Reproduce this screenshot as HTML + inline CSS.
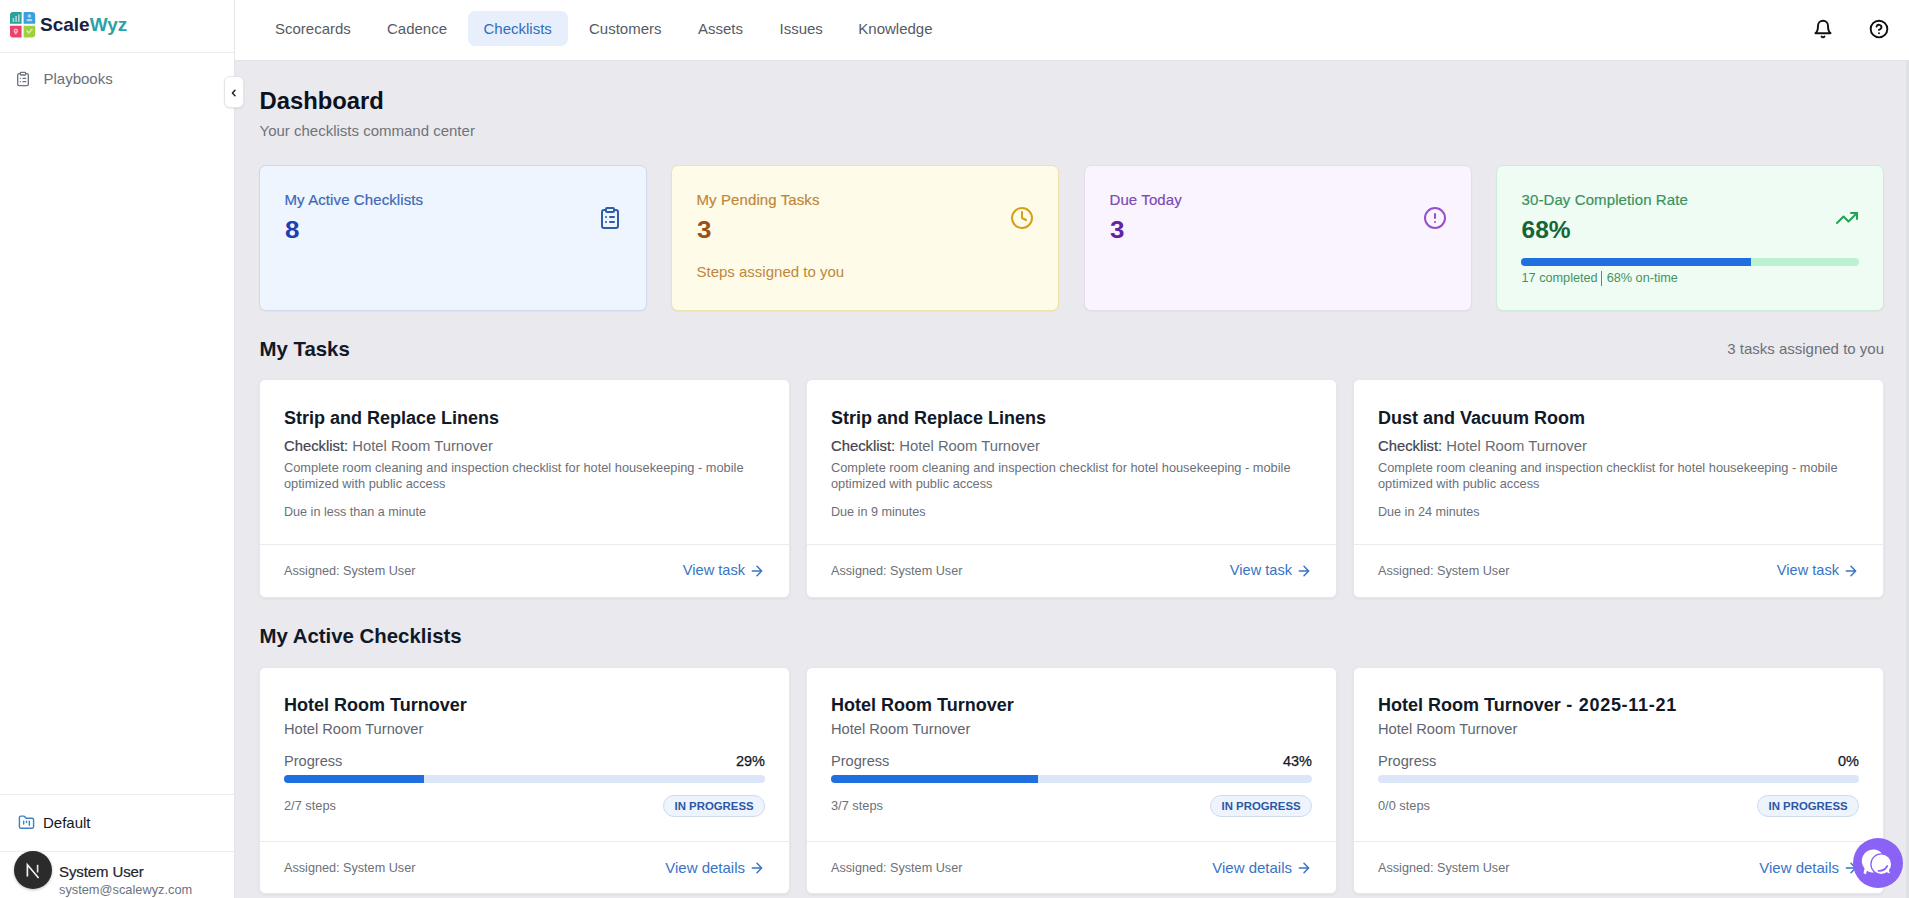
<!DOCTYPE html>
<html><head><meta charset="utf-8">
<style>
*{box-sizing:border-box;margin:0;padding:0}
html,body{width:1909px;height:898px;overflow:hidden}
body{font-family:"Liberation Sans",sans-serif;background:#e9e9ee;position:relative;color:#111827}
.t{position:absolute;white-space:nowrap}
.abs{position:absolute}
#sidebar{position:absolute;left:0;top:0;width:235px;height:898px;background:#fff;border-right:1px solid #e3e5e8}
#header{position:absolute;left:235px;top:0;width:1674px;height:61px;background:#fff;border-bottom:1px solid #e1e3e6}
.card{position:absolute;background:#fff;border:1px solid #e6e8eb;border-radius:6px;box-shadow:0 1px 3px rgba(16,24,40,0.06)}
.kpi{position:absolute;top:165px;width:388px;height:146px;border-radius:7px;border:1px solid;box-shadow:0 1px 2px rgba(0,0,0,.04)}
.ic{position:absolute;fill:none;stroke-linecap:round;stroke-linejoin:round}
</style></head>
<body>

<div id="sidebar">
<svg class="abs" style="left:9px;top:11px" width="28" height="28" viewBox="0 0 28 28">
<path d="M1 4 Q1 1 4 1 L12.6 1 L12.6 12.8 L1 12.8 Z" fill="#2ba39b"/>
<path d="M14.6 1 L23 1 Q26.2 1 26.2 4 L26.2 12.8 L14.6 12.8 Z" fill="#3a9fe0"/>
<path d="M1 14.7 L12.6 14.7 L12.6 26.4 L4 26.4 Q1 26.4 1 23.4 Z" fill="#ea426d"/>
<path d="M14.6 14.7 L26.2 14.7 L26.2 23.4 Q26.2 26.4 23 26.4 L14.6 26.4 Z" fill="#9fd03f"/>
<rect x="3.6" y="7" width="1.6" height="4" fill="#fff" opacity=".6"/><rect x="6.3" y="5" width="1.6" height="6" fill="#fff" opacity=".6"/><rect x="9" y="3.5" width="1.6" height="7.5" fill="#fff" opacity=".6"/>
<circle cx="20.4" cy="5" r="1.8" fill="#fff" opacity=".6"/><rect x="17.5" y="8" width="5.8" height="2.2" rx="1" fill="#fff" opacity=".6"/>
<path d="M6.8 17.5 a2.3 2.3 0 0 1 2.3 2.3 c0 1.6 -2.3 4 -2.3 4 c0 0 -2.3 -2.4 -2.3 -4 a2.3 2.3 0 0 1 2.3 -2.3z" fill="#fff" opacity=".6"/><circle cx="6.8" cy="19.8" r=".8" fill="#ea426d"/>
<path d="M17.6 19.6 L19.8 21.8 L23.4 18" stroke="#fff" stroke-width="1.5" fill="none" opacity=".6"/>
</svg>
<div class="t" style="top:13.62px;font-size:19px;line-height:22.8px;color:#17223f;font-weight:700;left:40px;"><span style="color:#17223f">Scale</span><span style="color:#2aa3a6">Wyz</span></div>
<div class="abs" style="left:0;top:52px;width:234px;height:1px;background:#ebecef"></div>
<svg class="ic" style="left:15px;top:71px" width="16" height="16" viewBox="0 0 24 24" stroke="#6b7280" stroke-width="2">
<rect x="8" y="2" width="8" height="4" rx="1"/><path d="M16 4h2a2 2 0 0 1 2 2v14a2 2 0 0 1-2 2H6a2 2 0 0 1-2-2V6a2 2 0 0 1 2-2h2"/><path d="M12 11h4M12 16h4M8 11h.01M8 16h.01"/></svg>
<div class="t" style="top:70.10px;font-size:15px;line-height:18.0px;color:#6a6e76;left:43.5px;">Playbooks</div>
<div class="abs" style="left:0;top:794px;width:234px;height:1px;background:#ebecef"></div>
<svg class="ic" style="left:18px;top:814px" width="17" height="17" viewBox="0 0 24 24" stroke="#3b82c4" stroke-width="2">
<path d="M20 20a2 2 0 0 0 2-2V8a2 2 0 0 0-2-2h-7.9a2 2 0 0 1-1.69-.9L9.6 3.9A2 2 0 0 0 7.93 3H4a2 2 0 0 0-2 2v13a2 2 0 0 0 2 2Z"/><path d="M8 10v4M12 10v2M16 10v6" /></svg>
<div class="t" style="top:814.20px;font-size:15px;line-height:18.0px;color:#111827;left:43px;">Default</div>
<div class="abs" style="left:0;top:851px;width:234px;height:1px;background:#ebecef"></div>
<div class="abs" style="left:14px;top:851px;width:38px;height:38px;border-radius:50%;background:#2b2b2b;box-shadow:0 1px 3px rgba(0,0,0,.25)"></div>
<svg class="abs" style="left:14px;top:851px" width="38" height="38" viewBox="0 0 38 38"><path d="M13.4 25.6 V13.8 L24.6 27" stroke="#f0f0f0" stroke-width="1.7" fill="none" stroke-linejoin="miter"/><path d="M23.6 13.8 V21.5" stroke="#e8e8e8" stroke-width="1.6"/></svg>
<div class="t" style="top:863.00px;font-size:15px;line-height:18.0px;color:#1f2430;left:59px;letter-spacing:-0.1px;-webkit-text-stroke:0.2px #1f2430;">System User</div>
<div class="t" style="top:882.38px;font-size:12.8px;line-height:15.36px;color:#6b7280;left:59px;">system@scalewyz.com</div>
</div>
<div class="abs" style="left:224px;top:76px;width:20px;height:32px;background:#fff;border:1px solid #e3e5e9;border-radius:6px;box-shadow:0 1px 2px rgba(0,0,0,.08)"></div>
<svg class="ic" style="left:229px;top:88px" width="10" height="10" viewBox="0 0 10 10" stroke="#222" stroke-width="1.5"><path d="M6 2.2 L3.4 5 L6 7.8"/></svg>
<div id="header"></div>
<div class="abs" style="left:468px;top:11px;width:100px;height:35px;border-radius:7px;background:#e6effb"></div>
<div class="t" style="top:20.30px;font-size:15px;line-height:18.0px;color:#565b62;left:275px;">Scorecards</div>
<div class="t" style="top:20.30px;font-size:15px;line-height:18.0px;color:#565b62;left:387px;">Cadence</div>
<div class="t" style="top:20.30px;font-size:15px;line-height:18.0px;color:#2f6dbd;left:483.5px;">Checklists</div>
<div class="t" style="top:20.30px;font-size:15px;line-height:18.0px;color:#565b62;left:589px;">Customers</div>
<div class="t" style="top:20.30px;font-size:15px;line-height:18.0px;color:#565b62;left:698px;">Assets</div>
<div class="t" style="top:20.30px;font-size:15px;line-height:18.0px;color:#565b62;left:779.5px;">Issues</div>
<div class="t" style="top:20.30px;font-size:15px;line-height:18.0px;color:#565b62;left:858.3px;">Knowledge</div>
<svg class="ic" style="left:1813px;top:19px" width="20" height="20" viewBox="0 0 24 24" stroke="#111" stroke-width="2.3">
<path d="M6 8a6 6 0 0 1 12 0c0 7 3 9 3 9H3s3-2 3-9"/><path d="M10.3 21a1.94 1.94 0 0 0 3.4 0"/></svg>
<svg class="ic" style="left:1869px;top:19px" width="20" height="20" viewBox="0 0 24 24" stroke="#111" stroke-width="2.3">
<circle cx="12" cy="12" r="10"/><path d="M9.09 9a3 3 0 0 1 5.83 1c0 2-3 3-3 3"/><path d="M12 17h.01"/></svg>
<div class="t" style="top:86.57px;font-size:23.8px;line-height:28.56px;color:#0b1120;font-weight:700;left:259.5px;">Dashboard</div>
<div class="t" style="top:121.80px;font-size:15px;line-height:18.0px;color:#707379;left:259.5px;">Your checklists command center</div>
<div class="kpi" style="left:259px;background:#eef5fe;border-color:#ccdaec"></div>
<div class="t" style="top:191.20px;font-size:15px;line-height:18.0px;color:#3a68b6;left:284.5px;-webkit-text-stroke:0.2px #3a68b6;letter-spacing:0.1px;">My Active Checklists</div>
<div class="t" style="top:214.71px;font-size:24.5px;line-height:29.4px;color:#1e40af;font-weight:700;left:284.5px;transform:scaleX(1.06);transform-origin:0 0;">8</div>
<svg class="ic" style="left:598px;top:206px" width="24" height="24" viewBox="0 0 24 24" stroke="#2f5ea6" stroke-width="2"><rect x="8" y="2" width="8" height="4" rx="1"/><path d="M16 4h2a2 2 0 0 1 2 2v14a2 2 0 0 1-2 2H6a2 2 0 0 1-2-2V6a2 2 0 0 1 2-2h2"/><path d="M12 11h4M12 16h4M8 11h.01M8 16h.01"/></svg>
<div class="kpi" style="left:671px;background:#fefbe9;border-color:#efe2aa"></div>
<div class="t" style="top:191.20px;font-size:15px;line-height:18.0px;color:#c0873a;left:696.5px;-webkit-text-stroke:0.2px #c0873a;letter-spacing:0.1px;">My Pending Tasks</div>
<div class="t" style="top:214.71px;font-size:24.5px;line-height:29.4px;color:#9b5116;font-weight:700;left:696.5px;transform:scaleX(1.06);transform-origin:0 0;">3</div>
<div class="t" style="top:262.90px;font-size:15px;line-height:18.0px;color:#c0873a;left:696.5px;">Steps assigned to you</div>
<svg class="ic" style="left:1010px;top:206px" width="24" height="24" viewBox="0 0 24 24" stroke="#d4a017" stroke-width="2"><circle cx="12" cy="12" r="10"/><path d="M12 6v6l4 2"/></svg>
<div class="kpi" style="left:1084px;background:#faf4fe;border-color:#e6dbef"></div>
<div class="t" style="top:191.20px;font-size:15px;line-height:18.0px;color:#7d4ab8;left:1109.5px;-webkit-text-stroke:0.2px #7d4ab8;letter-spacing:0.1px;">Due Today</div>
<div class="t" style="top:214.71px;font-size:24.5px;line-height:29.4px;color:#6322a6;font-weight:700;left:1109.5px;transform:scaleX(1.06);transform-origin:0 0;">3</div>
<svg class="ic" style="left:1423px;top:206px" width="24" height="24" viewBox="0 0 24 24" stroke="#9651c9" stroke-width="2"><circle cx="12" cy="12" r="10"/><path d="M12 8v4M12 16h.01"/></svg>
<div class="kpi" style="left:1496px;background:#effcf3;border-color:#cdebd7"></div>
<div class="t" style="top:191.20px;font-size:15px;line-height:18.0px;color:#3a9260;left:1521.5px;-webkit-text-stroke:0.2px #3a9260;letter-spacing:0.1px;">30-Day Completion Rate</div>
<div class="t" style="top:214.71px;font-size:24.5px;line-height:29.4px;color:#166534;font-weight:700;left:1521.5px;">68%</div>
<svg class="ic" style="left:1835px;top:206px" width="24" height="24" viewBox="0 0 24 24" stroke="#22a355" stroke-width="2"><path d="M22 7 13.5 15.5 8.5 10.5 2 17"/><path d="M16 7h6v6"/></svg>
<div class="abs" style="left:1521px;top:258px;width:338px;height:8px;border-radius:4px;background:#bdf0cf"></div>
<div class="abs" style="left:1521px;top:258px;width:230px;height:8px;border-radius:4px 0 0 4px;background:#1f6fe0"></div>
<div class="t" style="top:270.58px;font-size:12.7px;line-height:15.24px;color:#3f9462;left:1521.5px;">17 completed<span style="display:inline-block;width:1px;height:15px;background:#4b9468;margin:0 5px 0 3px;vertical-align:-4px"></span>68% on-time</div>
<div class="t" style="top:336.59px;font-size:20.4px;line-height:24.48px;color:#111827;font-weight:700;left:259.5px;">My Tasks</div>
<div class="t" style="top:340.30px;font-size:15px;line-height:18.0px;color:#6d7076;right:25px;">3 tasks assigned to you</div>
<div class="card" style="left:259px;top:379px;width:531px;height:219px"></div>
<div class="t" style="top:407.66px;font-size:18px;line-height:21.6px;color:#111827;font-weight:700;left:284px;">Strip and Replace Linens</div>
<div class="t" style="top:437.89px;font-size:14.8px;line-height:17.76px;color:#676c74;left:284px;"><span style="color:#3f444c;-webkit-text-stroke:0.2px #3f444c">Checklist:</span> Hotel Room Turnover</div>
<div class="t" style="left:284px;top:460.30px;width:481px;white-space:normal;font-size:12.8px;line-height:16px;color:#6b7079">Complete room cleaning and inspection checklist for hotel housekeeping - mobile optimized with public access</div>
<div class="t" style="top:504.87px;font-size:12.6px;line-height:15.12px;color:#6b7079;left:284px;">Due in less than a minute</div>
<div class="abs" style="left:260px;top:544px;width:529px;height:1px;background:#e9ebee"></div>
<div class="t" style="top:564.13px;font-size:12.65px;line-height:15.18px;color:#6b7079;left:284px;">Assigned: System User</div>
<div class="t" style="top:561.78px;font-size:14.6px;line-height:17.52px;color:#3874c4;right:1164px;">View task</div>
<svg class="ic" style="left:749px;top:562.9px" width="16" height="16" viewBox="0 0 24 24" stroke="#3874c4" stroke-width="2.2"><path d="M5 12h14M12 5l7 7-7 7"/></svg>
<div class="card" style="left:806px;top:379px;width:531px;height:219px"></div>
<div class="t" style="top:407.66px;font-size:18px;line-height:21.6px;color:#111827;font-weight:700;left:831px;">Strip and Replace Linens</div>
<div class="t" style="top:437.89px;font-size:14.8px;line-height:17.76px;color:#676c74;left:831px;"><span style="color:#3f444c;-webkit-text-stroke:0.2px #3f444c">Checklist:</span> Hotel Room Turnover</div>
<div class="t" style="left:831px;top:460.30px;width:481px;white-space:normal;font-size:12.8px;line-height:16px;color:#6b7079">Complete room cleaning and inspection checklist for hotel housekeeping - mobile optimized with public access</div>
<div class="t" style="top:504.87px;font-size:12.6px;line-height:15.12px;color:#6b7079;left:831px;">Due in 9 minutes</div>
<div class="abs" style="left:807px;top:544px;width:529px;height:1px;background:#e9ebee"></div>
<div class="t" style="top:564.13px;font-size:12.65px;line-height:15.18px;color:#6b7079;left:831px;">Assigned: System User</div>
<div class="t" style="top:561.78px;font-size:14.6px;line-height:17.52px;color:#3874c4;right:617px;">View task</div>
<svg class="ic" style="left:1296px;top:562.9px" width="16" height="16" viewBox="0 0 24 24" stroke="#3874c4" stroke-width="2.2"><path d="M5 12h14M12 5l7 7-7 7"/></svg>
<div class="card" style="left:1353px;top:379px;width:531px;height:219px"></div>
<div class="t" style="top:407.66px;font-size:18px;line-height:21.6px;color:#111827;font-weight:700;left:1378px;">Dust and Vacuum Room</div>
<div class="t" style="top:437.89px;font-size:14.8px;line-height:17.76px;color:#676c74;left:1378px;"><span style="color:#3f444c;-webkit-text-stroke:0.2px #3f444c">Checklist:</span> Hotel Room Turnover</div>
<div class="t" style="left:1378px;top:460.30px;width:481px;white-space:normal;font-size:12.8px;line-height:16px;color:#6b7079">Complete room cleaning and inspection checklist for hotel housekeeping - mobile optimized with public access</div>
<div class="t" style="top:504.87px;font-size:12.6px;line-height:15.12px;color:#6b7079;left:1378px;">Due in 24 minutes</div>
<div class="abs" style="left:1354px;top:544px;width:529px;height:1px;background:#e9ebee"></div>
<div class="t" style="top:564.13px;font-size:12.65px;line-height:15.18px;color:#6b7079;left:1378px;">Assigned: System User</div>
<div class="t" style="top:561.78px;font-size:14.6px;line-height:17.52px;color:#3874c4;right:70px;">View task</div>
<svg class="ic" style="left:1843px;top:562.9px" width="16" height="16" viewBox="0 0 24 24" stroke="#3874c4" stroke-width="2.2"><path d="M5 12h14M12 5l7 7-7 7"/></svg>
<div class="t" style="top:624.29px;font-size:20.4px;line-height:24.48px;color:#111827;font-weight:700;left:259.5px;">My Active Checklists</div>
<div class="card" style="left:259px;top:667px;width:531px;height:227px"></div>
<div class="t" style="top:695.16px;font-size:18px;line-height:21.6px;color:#111827;font-weight:700;left:284px;">Hotel Room Turnover</div>
<div class="t" style="top:721.23px;font-size:14.66px;line-height:17.59px;color:#5f6570;left:284px;">Hotel Room Turnover</div>
<div class="t" style="top:753.38px;font-size:14.6px;line-height:17.52px;color:#5f6570;left:284px;">Progress</div>
<div class="t" style="top:752.88px;font-size:14.5px;line-height:17.4px;color:#111827;right:1144px;-webkit-text-stroke:0.25px #111827;">29%</div>
<div class="abs" style="left:284px;top:775px;width:481px;height:8px;border-radius:4px;background:#dbe6f8"></div>
<div class="abs" style="left:284px;top:775px;width:139.5px;height:8px;border-radius:4px 0 0 4px;background:#1f6fe0"></div>
<div class="t" style="top:797.88px;font-size:12.8px;line-height:15.36px;color:#6b7079;left:284px;">2/7 steps</div>
<div class="abs" style="left:663px;top:795px;width:102px;height:22px;border-radius:11px;background:#eef4fd;border:1px solid #d0dbea"></div>
<div class="t" style="top:799.91px;font-size:11.4px;line-height:13.68px;color:#2b57a3;font-weight:700;left:674.5px;">IN PROGRESS</div>
<div class="abs" style="left:260px;top:841px;width:529px;height:1px;background:#e9ebee"></div>
<div class="t" style="top:861.13px;font-size:12.65px;line-height:15.18px;color:#6b7079;left:284px;">Assigned: System User</div>
<div class="t" style="top:858.70px;font-size:15px;line-height:18.0px;color:#3874c4;right:1164px;">View details</div>
<svg class="ic" style="left:749px;top:860.0px" width="16" height="16" viewBox="0 0 24 24" stroke="#3874c4" stroke-width="2.2"><path d="M5 12h14M12 5l7 7-7 7"/></svg>
<div class="card" style="left:806px;top:667px;width:531px;height:227px"></div>
<div class="t" style="top:695.16px;font-size:18px;line-height:21.6px;color:#111827;font-weight:700;left:831px;">Hotel Room Turnover</div>
<div class="t" style="top:721.23px;font-size:14.66px;line-height:17.59px;color:#5f6570;left:831px;">Hotel Room Turnover</div>
<div class="t" style="top:753.38px;font-size:14.6px;line-height:17.52px;color:#5f6570;left:831px;">Progress</div>
<div class="t" style="top:752.88px;font-size:14.5px;line-height:17.4px;color:#111827;right:597px;-webkit-text-stroke:0.25px #111827;">43%</div>
<div class="abs" style="left:831px;top:775px;width:481px;height:8px;border-radius:4px;background:#dbe6f8"></div>
<div class="abs" style="left:831px;top:775px;width:206.8px;height:8px;border-radius:4px 0 0 4px;background:#1f6fe0"></div>
<div class="t" style="top:797.88px;font-size:12.8px;line-height:15.36px;color:#6b7079;left:831px;">3/7 steps</div>
<div class="abs" style="left:1210px;top:795px;width:102px;height:22px;border-radius:11px;background:#eef4fd;border:1px solid #d0dbea"></div>
<div class="t" style="top:799.91px;font-size:11.4px;line-height:13.68px;color:#2b57a3;font-weight:700;left:1221.5px;">IN PROGRESS</div>
<div class="abs" style="left:807px;top:841px;width:529px;height:1px;background:#e9ebee"></div>
<div class="t" style="top:861.13px;font-size:12.65px;line-height:15.18px;color:#6b7079;left:831px;">Assigned: System User</div>
<div class="t" style="top:858.70px;font-size:15px;line-height:18.0px;color:#3874c4;right:617px;">View details</div>
<svg class="ic" style="left:1296px;top:860.0px" width="16" height="16" viewBox="0 0 24 24" stroke="#3874c4" stroke-width="2.2"><path d="M5 12h14M12 5l7 7-7 7"/></svg>
<div class="card" style="left:1353px;top:667px;width:531px;height:227px"></div>
<div class="t" style="top:695.16px;font-size:18px;line-height:21.6px;color:#111827;font-weight:700;left:1378px;">Hotel Room Turnover<span style="letter-spacing:0.7px"> - 2025-11-21</span></div>
<div class="t" style="top:721.23px;font-size:14.66px;line-height:17.59px;color:#5f6570;left:1378px;">Hotel Room Turnover</div>
<div class="t" style="top:753.38px;font-size:14.6px;line-height:17.52px;color:#5f6570;left:1378px;">Progress</div>
<div class="t" style="top:752.88px;font-size:14.5px;line-height:17.4px;color:#111827;right:50px;-webkit-text-stroke:0.25px #111827;">0%</div>
<div class="abs" style="left:1378px;top:775px;width:481px;height:8px;border-radius:4px;background:#dbe6f8"></div>
<div class="t" style="top:797.88px;font-size:12.8px;line-height:15.36px;color:#6b7079;left:1378px;">0/0 steps</div>
<div class="abs" style="left:1757px;top:795px;width:102px;height:22px;border-radius:11px;background:#eef4fd;border:1px solid #d0dbea"></div>
<div class="t" style="top:799.91px;font-size:11.4px;line-height:13.68px;color:#2b57a3;font-weight:700;left:1768.5px;">IN PROGRESS</div>
<div class="abs" style="left:1354px;top:841px;width:529px;height:1px;background:#e9ebee"></div>
<div class="t" style="top:861.13px;font-size:12.65px;line-height:15.18px;color:#6b7079;left:1378px;">Assigned: System User</div>
<div class="t" style="top:858.70px;font-size:15px;line-height:18.0px;color:#3874c4;right:70px;">View details</div>
<svg class="ic" style="left:1843px;top:860.0px" width="16" height="16" viewBox="0 0 24 24" stroke="#3874c4" stroke-width="2.2"><path d="M5 12h14M12 5l7 7-7 7"/></svg>
<svg class="abs" style="left:1853px;top:838px;overflow:visible" width="50" height="50" viewBox="0 0 50 50">
<circle cx="25" cy="25" r="25" fill="#8a62f6"/>
<path d="M20.5 11.5 a11.5 11.5 0 1 1 -6.5 21.2 L12.8 36.5 L10.5 35 L11.6 30.5 A11.5 11.5 0 0 1 20.5 11.5 Z" fill="#fff"/>
<path d="M30.5 33 L37.6 36.4 L35.2 30 Z" fill="#fff" stroke="#8a62f6" stroke-width="1.3" stroke-linejoin="round"/>
<circle cx="28.3" cy="26.2" r="10.4" fill="#fff" stroke="#8a62f6" stroke-width="1.3"/>
<path d="M32 33.5 L37 35.6 L35.6 31 Z" fill="#fff"/>
<path d="M25.5 32.8 Q31.5 33.2 34.2 28" fill="none" stroke="#8a62f6" stroke-width="1.7" stroke-linecap="round"/>
</svg>
<div class="abs" style="left:1906px;top:61px;width:3px;height:837px;background:#dfe0e4"></div>
</body></html>
